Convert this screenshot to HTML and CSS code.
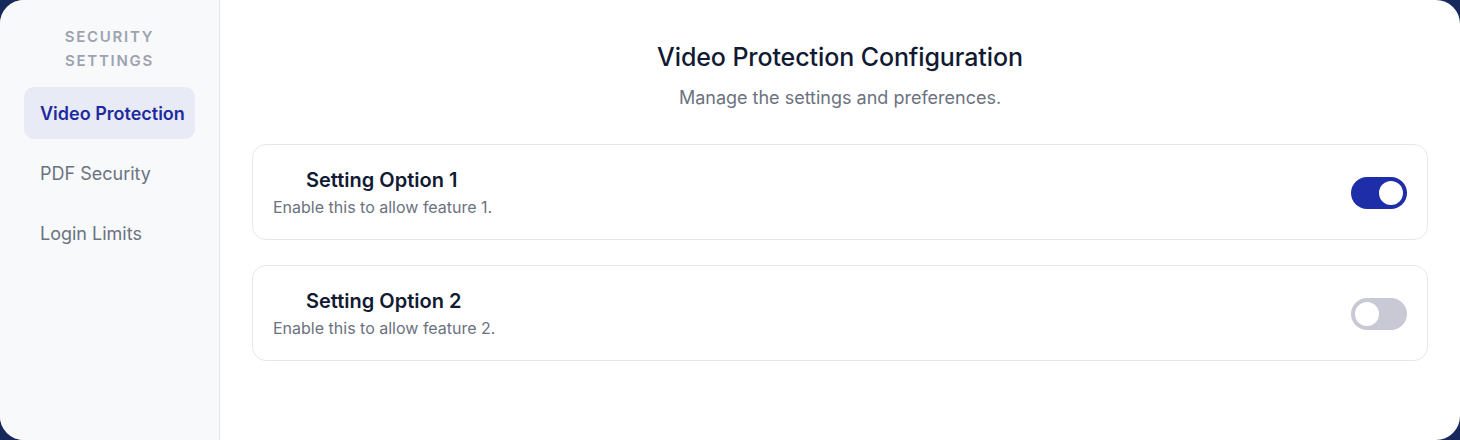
FILE: index.html
```html
<!DOCTYPE html>
<html lang="en">
<head>
<meta charset="utf-8">
<title>Security Settings</title>
<link rel="stylesheet" href="styles.css">
</head>
<body>
<div class="shell">
  <aside class="sidebar">
    <div class="side-heading">SECURITY SETTINGS</div>
    <nav class="side-nav">
      <a class="side-item active">Video Protection</a>
      <a class="side-item">PDF Security</a>
      <a class="side-item">Login Limits</a>
    </nav>
  </aside>
  <main class="main">
    <h1 class="title">Video Protection Configuration</h1>
    <p class="subtitle">Manage the settings and preferences.</p>
    <div class="options">
      <div class="option">
        <div class="option-text">
          <div class="option-title">Setting Option 1</div>
          <div class="option-desc">Enable this to allow feature 1.</div>
        </div>
        <span class="toggle on"><span class="knob"></span></span>
      </div>
      <div class="option">
        <div class="option-text">
          <div class="option-title">Setting Option 2</div>
          <div class="option-desc">Enable this to allow feature 2.</div>
        </div>
        <span class="toggle"><span class="knob"></span></span>
      </div>
    </div>
  </main>
</div>
</body>
</html>
```
FILE: styles.css
```css
* { box-sizing: border-box; }
html, body { margin: 0; padding: 0; }
body {
  width: 1460px;
  height: 440px;
  background: #16285c;
  font-family: Inter, "Noto Sans", sans-serif;
  overflow: hidden;
}
.shell {
  display: flex;
  width: 1460px;
  height: 440px;
  background: #ffffff;
  border-radius: 24px;
  overflow: hidden;
}
.sidebar {
  width: 220px;
  flex: 0 0 220px;
  background: #f8f9fb;
  border-right: 1px solid #e3e5ea;
  padding: 24px 24px;
}
.side-heading {
  text-align: center;
  font-size: 15px;
  line-height: 24px;
  font-weight: 600;
  letter-spacing: 1.7px;
  color: #9ca3af;
  padding: 0 14px;
  margin-top: 1px;
}
.side-nav {
  margin-top: 14px;
  display: flex;
  flex-direction: column;
  gap: 8px;
}
.side-item {
  display: flex;
  align-items: center;
  height: 52px;
  padding: 0 16px;
  border-radius: 10px;
  font-size: 18px;
  color: #6b7280;
  white-space: nowrap;
}
.side-item.active {
  background: #e8eaf6;
  color: #1e2ba0;
  font-weight: 600;
}
.main {
  flex: 1;
  padding: 40px 32px 0;
}
.title {
  margin: 0;
  text-align: center;
  font-size: 25px;
  line-height: 34px;
  font-weight: 500;
  color: #111a33;
  letter-spacing: -0.1px;
}
.subtitle {
  margin: 11px 0 0;
  text-align: center;
  font-size: 18px;
  line-height: 26px;
  color: #6b7280;
}
.options {
  margin-top: 33px;
  display: flex;
  flex-direction: column;
  gap: 25px;
}
.option {
  display: flex;
  align-items: center;
  justify-content: space-between;
  border: 1px solid #e5e7eb;
  border-radius: 14px;
  padding: 22px 20px 21px;
  background: #fff;
}
.option-text {
  display: flex;
  flex-direction: column;
  gap: 3px;
}
.option-title {
  margin-left: 33px;
  font-size: 20px;
  line-height: 26px;
  font-weight: 600;
  color: #111a33;
}
.option-desc {
  font-size: 16px;
  line-height: 22px;
  color: #6b7280;
}
.toggle {
  position: relative;
  width: 56px;
  height: 32px;
  border-radius: 16px;
  background: #c9c9d6;
  flex: 0 0 auto;
}
.toggle.on { background: #1e2ea8; }
.knob {
  position: absolute;
  top: 4px;
  left: 4px;
  width: 24px;
  height: 24px;
  border-radius: 50%;
  background: #fff;
}
.toggle.on .knob { left: 28px; }
```
